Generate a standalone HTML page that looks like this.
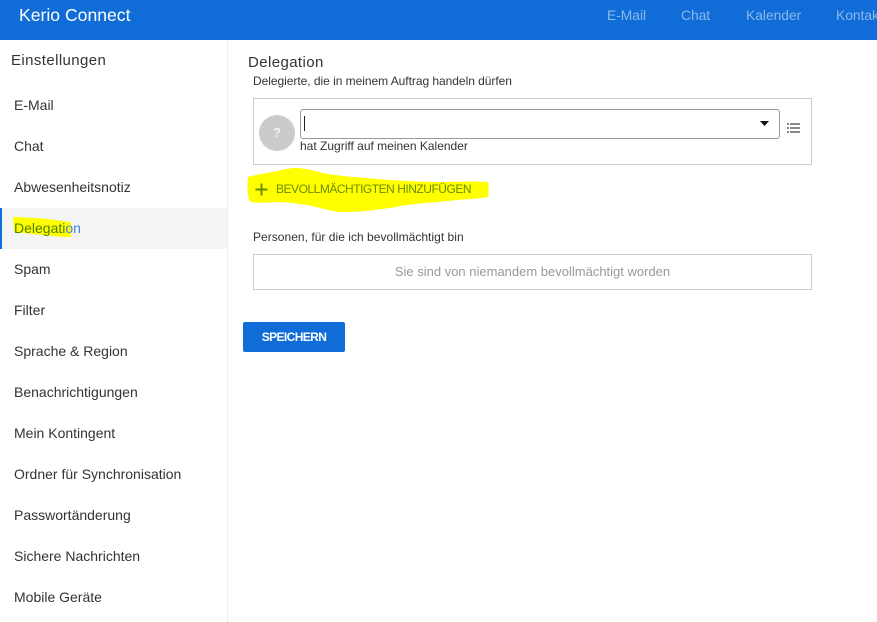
<!DOCTYPE html>
<html lang="de">
<head>
<meta charset="utf-8">
<title>Kerio Connect</title>
<style>
html,body{margin:0;padding:0;width:877px;height:622px;overflow:hidden;background:#fff}
body{font-family:"Liberation Sans",sans-serif;color:#333;position:relative}
.t{position:absolute;white-space:nowrap;line-height:18px;height:18px}
.hdr{position:absolute;left:0;top:0;width:877px;height:40px;background:#106dd8}
.nav{color:#8db8ec;font-size:13.8px;top:7px}
.side{position:absolute;left:0;top:40px;width:227px;height:582px;border-right:1px solid #eee}
.active{position:absolute;left:0;top:208px;width:227px;height:41px;background:#f4f4f4}
.bar{position:absolute;left:0;top:208px;width:2px;height:41px;background:#106dd8}
.i{left:14px;font-size:14px;color:#333}
.box{position:absolute;box-sizing:border-box;border:1px solid #ccc;background:#fff}
.s{font-size:12px;color:#333}
</style>
</head>
<body>
<div class="hdr"></div>
<div class="t" style="left:19px;top:6px;font-size:17.6px;color:#fff">Kerio Connect</div>
<div class="t nav" style="left:607px">E-Mail</div>
<div class="t nav" style="left:681px">Chat</div>
<div class="t nav" style="left:746px">Kalender</div>
<div class="t nav" style="left:836px">Kontakte</div>

<div class="side"></div>
<div class="active"></div>
<div class="bar"></div>

<svg style="position:absolute;left:0;top:0;pointer-events:none" width="877" height="622" viewBox="0 0 877 622">
<path d="M13 217C22 217 30 218 37 218C50 219 60 221 71 222L71 237C60 237 52 236 43 235C33 234 22 233 14 232Z" fill="#ffff00"/>
<path d="M248 177C255 175 265 173 273 172C282 170 288 168 295 168C305 168 315 171 323 173C333 175 343 176 353 177C365 178 378 179 390 180C407 181 423 182 440 182C456 182 472 181 488 182C489 187 489 192 488 197C478 199 467 199 457 200C440 202 423 203 407 205C396 207 384 209 373 210C362 212 351 212 340 212C329 211 318 207 307 205C296 203 284 202 273 202C265 203 257 203 250 202C247 194 247 185 248 177Z" fill="#ffff00"/>
</svg>

<div class="t" style="left:11px;top:52px;font-size:15px;letter-spacing:.4px">Einstellungen</div>
<div class="t i" style="top:96px">E-Mail</div>
<div class="t i" style="top:137px">Chat</div>
<div class="t i" style="top:178px">Abwesenheitsnotiz</div>
<div class="t i" style="top:219px;color:#4a80dd"><span style="color:#4f7f00">Delegati</span>on</div>
<div class="t i" style="top:260px">Spam</div>
<div class="t i" style="top:301px">Filter</div>
<div class="t i" style="top:342px">Sprache &amp; Region</div>
<div class="t i" style="top:383px">Benachrichtigungen</div>
<div class="t i" style="top:424px">Mein Kontingent</div>
<div class="t i" style="top:465px">Ordner für Synchronisation</div>
<div class="t i" style="top:506px">Passwortänderung</div>
<div class="t i" style="top:547px">Sichere Nachrichten</div>
<div class="t i" style="top:588px">Mobile Geräte</div>

<div class="t" style="left:248px;top:54px;font-size:15px;letter-spacing:.4px">Delegation</div>
<div class="t s" style="left:253px;top:72px;letter-spacing:-.04px">Delegierte, die in meinem Auftrag handeln dürfen</div>

<div class="box" style="left:253px;top:98px;width:559px;height:67px"></div>
<div style="position:absolute;left:259px;top:115px;width:36px;height:36px;border-radius:50%;background:#cbcbcb"></div>
<div class="t" style="left:259px;top:124px;width:36px;text-align:center;color:#f2f2f2;font-size:13px;font-weight:bold">?</div>
<div style="position:absolute;box-sizing:border-box;left:300px;top:109px;width:480px;height:30px;border:1px solid #999;border-radius:3px;background:#fff"></div>
<div style="position:absolute;left:304px;top:116px;width:1px;height:15px;background:#222"></div>
<svg style="position:absolute;left:760px;top:121px" width="10" height="6" viewBox="0 0 10 6"><path d="M0 0H9L4.500 5Z" fill="#111"/></svg>
<svg style="position:absolute;left:787px;top:122px" width="14" height="12" viewBox="0 0 14 12" fill="#8a8a8a" shape-rendering="crispEdges"><rect x="0" y="1" width="2" height="2"/><rect x="3" y="1" width="10" height="2"/><rect x="0" y="5" width="2" height="2"/><rect x="3" y="5" width="10" height="2"/><rect x="0" y="9" width="2" height="2"/><rect x="3" y="9" width="10" height="2"/></svg>
<div class="t s" style="left:300px;top:137px">hat Zugriff auf meinen Kalender</div>

<svg style="position:absolute;left:255px;top:183px" width="13" height="13" viewBox="0 0 13 13"><path d="M6.500 0.500V12.500M0.500 6.500H12.500" stroke="#6a9000" stroke-width="2" fill="none"/></svg>
<div class="t" style="left:276px;top:180px;font-size:12px;letter-spacing:-.48px;color:#6c8c00">BEVOLLMÄCHTIGTEN HINZUFÜGEN</div>

<div class="t s" style="left:253px;top:228px;letter-spacing:.03px">Personen, für die ich bevollmächtigt bin</div>
<div class="box" style="left:253px;top:254px;width:559px;height:36px"></div>
<div class="t" style="left:253px;top:263px;width:559px;text-align:center;font-size:13px;color:#999">Sie sind von niemandem bevollmächtigt worden</div>

<div style="position:absolute;left:243px;top:322px;width:102px;height:30px;background:#106dd8;border-radius:2px"></div>
<div class="t" style="left:243px;top:328px;width:102px;text-align:center;font-size:12px;letter-spacing:-.6px;font-weight:bold;color:#fff">SPEICHERN</div>
</body>
</html>
